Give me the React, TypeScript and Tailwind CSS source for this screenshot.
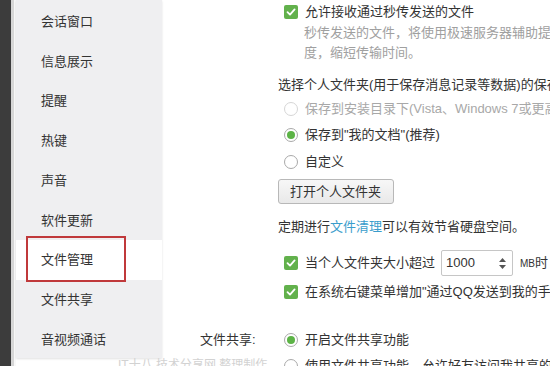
import React from 'react';

const navItems = ['会话窗口', '信息展示', '提醒', '热键', '声音', '软件更新', '文件管理', '文件共享', '音视频通话'];
const activeItem = '文件管理';

function Check() {
  return (
    <span className="w-[14px] h-[14px] shrink-0 rounded-[2px] bg-[#62b14c] flex items-center justify-center">
      <svg width="10" height="10" viewBox="0 0 10 10" fill="none">
        <path d="M1.5 5.2 L4 7.6 L8.6 2.4" stroke="#fff" strokeWidth="1.8" strokeLinecap="round" strokeLinejoin="round" />
      </svg>
    </span>
  );
}

function Radio({ checked = false, disabled = false }: { checked?: boolean; disabled?: boolean }) {
  return (
    <span
      className={
        'w-[14px] h-[14px] shrink-0 rounded-full border bg-white flex items-center justify-center ' +
        (disabled ? 'border-[#d6d6d6]' : 'border-[#a9a9a9]')
      }
    >
      {checked && <span className="w-[8px] h-[8px] rounded-full bg-[#5cb346]" />}
    </span>
  );
}

export default function App() {
  return (
    <div
      className="relative w-[550px] h-[366px] overflow-hidden flex bg-white text-[13px] text-[#333] whitespace-nowrap"
      style={{ fontFamily: '"Liberation Sans", "Noto Sans CJK SC", sans-serif' }}
    >
      <div className="w-[11px] shrink-0 bg-[#3c3c3c]" />
      <div className="w-[3px] shrink-0 bg-[#d6d6d6]" />
      <div className="w-[2px] shrink-0 bg-[#f8f8f8]" />

      <nav className="w-[146px] h-[358px] shrink-0 bg-[#efeff1] pt-[2px] shadow-[0_1px_2px_rgba(0,0,0,0.12)]">
        {navItems.map(item => (
          <div
            key={item}
            className={'h-[39.7px] flex items-center pl-[25px] ' + (item === activeItem ? 'bg-white' : '')}
          >
            {item}
          </div>
        ))}
      </nav>

      <main className="flex-1 min-w-0">
        <div className="pl-[116px]">
          <div className="h-[23px] flex items-center gap-[7px] pl-[6px]">
            <Check />
            <span>允许接收通过秒传发送的文件</span>
          </div>
          <div className="h-[20px] flex items-center pl-[26px] text-[#a0a0a0]">秒传发送的文件，将使用极速服务器辅助提升传输速</div>
          <div className="h-[19px] flex items-center pl-[26px] text-[#a0a0a0]">度，缩短传输时间。</div>

          <div className="mt-[13px] h-[20px] flex items-center">选择个人文件夹(用于保存消息记录等数据)的保存位置</div>
          <div className="mt-[3px] h-[21px] flex items-center gap-[7px] pl-[6px] text-[#a8a8a8]">
            <Radio disabled />
            <span>保存到安装目录下(Vista、Windows 7或更高版本)</span>
          </div>
          <div className="mt-[5px] h-[22px] flex items-center gap-[7px] pl-[6px]">
            <Radio checked />
            <span>保存到"我的文档"(推荐)</span>
          </div>
          <div className="mt-[5px] h-[22px] flex items-center gap-[7px] pl-[6px]">
            <Radio />
            <span>自定义</span>
          </div>
          <div className="mt-[6px]">
            <button className="h-[25px] w-[116px] rounded-[3px] border border-[#b8b8b8] bg-gradient-to-b from-[#f7f7f7] to-[#e9e9e9] text-left pl-[11px]">
              打开个人文件夹
            </button>
          </div>

          <div className="mt-[13px] h-[20px] flex items-center">
            <span>定期进行</span>
            <span className="text-[#3a9dcc]">文件清理</span>
            <span>可以有效节省硬盘空间。</span>
            <span className="ml-[29px] h-[34px] w-[80px] shrink-0 rounded-[3px] border border-[#c4c4c4] bg-[#f5f5f5]" />
          </div>

          <div className="mt-[13px] h-[26px] flex items-center pl-[6px]">
            <Check />
            <span className="ml-[7px]">当个人文件夹大小超过</span>
            <span className="ml-[6px] h-[26px] w-[72px] shrink-0 rounded-[2px] border border-[#c6c6c6] flex items-center justify-between pl-[4px] pr-[6px]">
              <span>1000</span>
              <span className="flex flex-col items-center gap-[3px]">
                <svg width="7" height="4" viewBox="0 0 7 4"><path d="M0 4 L3.5 0 L7 4 Z" fill="#555" /></svg>
                <svg width="7" height="4" viewBox="0 0 7 4"><path d="M0 0 L3.5 4 L7 0 Z" fill="#555" /></svg>
              </span>
            </span>
            <span className="ml-[7px] text-[10px]">MB</span>
            <span>时</span>
          </div>
          <div className="mt-[6px] h-[20px] flex items-center gap-[7px] pl-[6px]">
            <Check />
            <span>在系统右键菜单增加"通过QQ发送到我的手机"</span>
          </div>
        </div>

        <div className="mt-[28px] h-[20px] flex items-center">
          <span className="w-[122px] shrink-0 pl-[38px]">文件共享:</span>
          <span className="flex items-center gap-[7px]">
            <Radio checked />
            <span>开启文件共享功能</span>
          </span>
        </div>
        <div className="mt-[6px] h-[20px] flex items-center pl-[122px] gap-[7px]">
          <Radio />
          <span>使用文件共享功能，允许好友访问我共享的文件</span>
        </div>
      </main>

      <div className="absolute left-[26px] top-[236px] w-[100px] h-[46px] border-2 border-[#c0393b]" />
      <div className="absolute left-[118px] top-[356px] text-[12px] text-[#d2d2d2]">IT十八 技术分享网 整理制作</div>
    </div>
  );
}
